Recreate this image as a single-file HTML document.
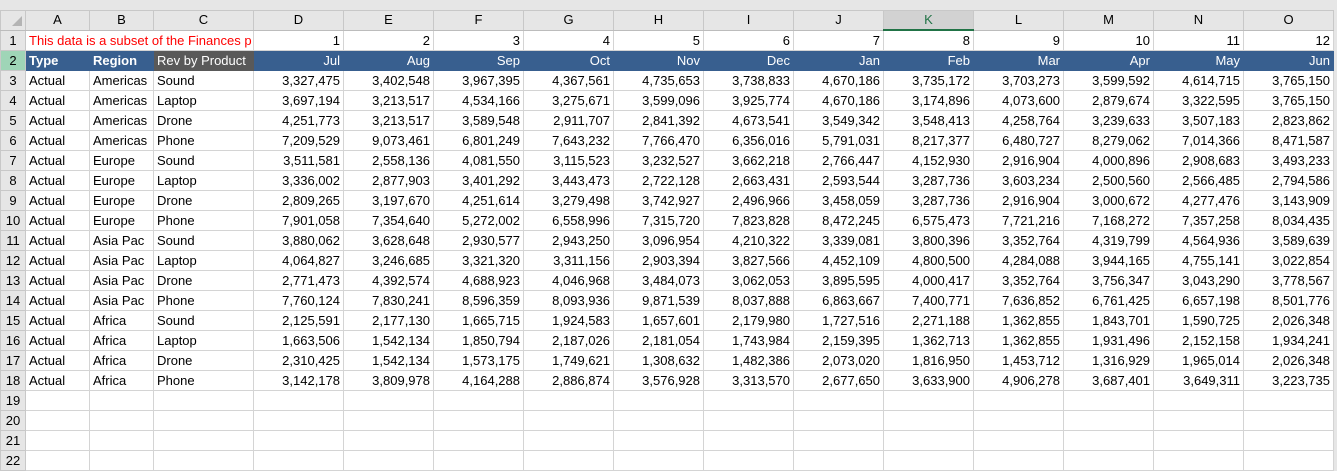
<!DOCTYPE html>
<html><head><meta charset="utf-8"><style>
body{margin:0;width:1337px;height:470px;overflow:hidden;background:#e6e6e6;font-family:"Liberation Sans",Arial,sans-serif;font-size:13px;}
table{position:absolute;left:0;top:10px;border-collapse:collapse;table-layout:fixed;width:1334px;}
td{height:19px;padding:0 3px;border:1px solid #d4d4d4;background:#fff;white-space:nowrap;overflow:hidden;line-height:19px;text-align:right;color:#000;}
tr.h td{height:18px;line-height:18px;background:#e6e6e6;text-align:center;border-color:#c8c8c8;border-bottom:1px solid #bcbcbc;}
td.r{background:#e6e6e6;text-align:center;padding:0;border-color:#c8c8c8;}
td.l{text-align:left;}
tr.b td{background:#385f8f;color:#fff;border-color:#385f8f;font-weight:normal;}
tr.b td.g{background:#595959;border-color:#595959;font-weight:normal;}
tr.b td.bo{font-weight:bold;}
tr.b td.r{background:#9fd5b7;color:#000;border-color:#c8c8c8;}
td.k{background:#d2d2d2 !important;color:#217346 !important;border-bottom:2px solid #217346 !important;}
.red{color:#ff0000;overflow:visible;}
</style></head><body>
<table>
<colgroup><col style="width:25px"><col style="width:64px"><col style="width:64px"><col style="width:100px"><col style="width:90px"><col style="width:90px"><col style="width:90px"><col style="width:90px"><col style="width:90px"><col style="width:90px"><col style="width:90px"><col style="width:90px"><col style="width:90px"><col style="width:90px"><col style="width:90px"><col style="width:90px"></colgroup>
<tr class="h"><td class="r" style="background:#e6e6e6"><svg width="12" height="12" style="vertical-align:middle;margin-left:8px"><path d="M11 1 L11 11 L1 11 Z" fill="#b4b4b4"/></svg></td><td>A</td><td>B</td><td>C</td><td>D</td><td>E</td><td>F</td><td>G</td><td>H</td><td>I</td><td>J</td><td class="k">K</td><td>L</td><td>M</td><td>N</td><td>O</td></tr>
<tr><td class="r">1</td><td class="l red" colspan="3" style="overflow:hidden">This data is a subset of the Finances p</td><td>1</td><td>2</td><td>3</td><td>4</td><td>5</td><td>6</td><td>7</td><td>8</td><td>9</td><td>10</td><td>11</td><td>12</td></tr>
<tr class="b"><td class="r">2</td><td class="l bo">Type</td><td class="l bo">Region</td><td class="l g">Rev by Product</td><td>Jul</td><td>Aug</td><td>Sep</td><td>Oct</td><td>Nov</td><td>Dec</td><td>Jan</td><td>Feb</td><td>Mar</td><td>Apr</td><td>May</td><td>Jun</td></tr>
<tr><td class="r">3</td><td class="l">Actual</td><td class="l">Americas</td><td class="l">Sound</td><td>3,327,475</td><td>3,402,548</td><td>3,967,395</td><td>4,367,561</td><td>4,735,653</td><td>3,738,833</td><td>4,670,186</td><td>3,735,172</td><td>3,703,273</td><td>3,599,592</td><td>4,614,715</td><td>3,765,150</td></tr>
<tr><td class="r">4</td><td class="l">Actual</td><td class="l">Americas</td><td class="l">Laptop</td><td>3,697,194</td><td>3,213,517</td><td>4,534,166</td><td>3,275,671</td><td>3,599,096</td><td>3,925,774</td><td>4,670,186</td><td>3,174,896</td><td>4,073,600</td><td>2,879,674</td><td>3,322,595</td><td>3,765,150</td></tr>
<tr><td class="r">5</td><td class="l">Actual</td><td class="l">Americas</td><td class="l">Drone</td><td>4,251,773</td><td>3,213,517</td><td>3,589,548</td><td>2,911,707</td><td>2,841,392</td><td>4,673,541</td><td>3,549,342</td><td>3,548,413</td><td>4,258,764</td><td>3,239,633</td><td>3,507,183</td><td>2,823,862</td></tr>
<tr><td class="r">6</td><td class="l">Actual</td><td class="l">Americas</td><td class="l">Phone</td><td>7,209,529</td><td>9,073,461</td><td>6,801,249</td><td>7,643,232</td><td>7,766,470</td><td>6,356,016</td><td>5,791,031</td><td>8,217,377</td><td>6,480,727</td><td>8,279,062</td><td>7,014,366</td><td>8,471,587</td></tr>
<tr><td class="r">7</td><td class="l">Actual</td><td class="l">Europe</td><td class="l">Sound</td><td>3,511,581</td><td>2,558,136</td><td>4,081,550</td><td>3,115,523</td><td>3,232,527</td><td>3,662,218</td><td>2,766,447</td><td>4,152,930</td><td>2,916,904</td><td>4,000,896</td><td>2,908,683</td><td>3,493,233</td></tr>
<tr><td class="r">8</td><td class="l">Actual</td><td class="l">Europe</td><td class="l">Laptop</td><td>3,336,002</td><td>2,877,903</td><td>3,401,292</td><td>3,443,473</td><td>2,722,128</td><td>2,663,431</td><td>2,593,544</td><td>3,287,736</td><td>3,603,234</td><td>2,500,560</td><td>2,566,485</td><td>2,794,586</td></tr>
<tr><td class="r">9</td><td class="l">Actual</td><td class="l">Europe</td><td class="l">Drone</td><td>2,809,265</td><td>3,197,670</td><td>4,251,614</td><td>3,279,498</td><td>3,742,927</td><td>2,496,966</td><td>3,458,059</td><td>3,287,736</td><td>2,916,904</td><td>3,000,672</td><td>4,277,476</td><td>3,143,909</td></tr>
<tr><td class="r">10</td><td class="l">Actual</td><td class="l">Europe</td><td class="l">Phone</td><td>7,901,058</td><td>7,354,640</td><td>5,272,002</td><td>6,558,996</td><td>7,315,720</td><td>7,823,828</td><td>8,472,245</td><td>6,575,473</td><td>7,721,216</td><td>7,168,272</td><td>7,357,258</td><td>8,034,435</td></tr>
<tr><td class="r">11</td><td class="l">Actual</td><td class="l">Asia Pac</td><td class="l">Sound</td><td>3,880,062</td><td>3,628,648</td><td>2,930,577</td><td>2,943,250</td><td>3,096,954</td><td>4,210,322</td><td>3,339,081</td><td>3,800,396</td><td>3,352,764</td><td>4,319,799</td><td>4,564,936</td><td>3,589,639</td></tr>
<tr><td class="r">12</td><td class="l">Actual</td><td class="l">Asia Pac</td><td class="l">Laptop</td><td>4,064,827</td><td>3,246,685</td><td>3,321,320</td><td>3,311,156</td><td>2,903,394</td><td>3,827,566</td><td>4,452,109</td><td>4,800,500</td><td>4,284,088</td><td>3,944,165</td><td>4,755,141</td><td>3,022,854</td></tr>
<tr><td class="r">13</td><td class="l">Actual</td><td class="l">Asia Pac</td><td class="l">Drone</td><td>2,771,473</td><td>4,392,574</td><td>4,688,923</td><td>4,046,968</td><td>3,484,073</td><td>3,062,053</td><td>3,895,595</td><td>4,000,417</td><td>3,352,764</td><td>3,756,347</td><td>3,043,290</td><td>3,778,567</td></tr>
<tr><td class="r">14</td><td class="l">Actual</td><td class="l">Asia Pac</td><td class="l">Phone</td><td>7,760,124</td><td>7,830,241</td><td>8,596,359</td><td>8,093,936</td><td>9,871,539</td><td>8,037,888</td><td>6,863,667</td><td>7,400,771</td><td>7,636,852</td><td>6,761,425</td><td>6,657,198</td><td>8,501,776</td></tr>
<tr><td class="r">15</td><td class="l">Actual</td><td class="l">Africa</td><td class="l">Sound</td><td>2,125,591</td><td>2,177,130</td><td>1,665,715</td><td>1,924,583</td><td>1,657,601</td><td>2,179,980</td><td>1,727,516</td><td>2,271,188</td><td>1,362,855</td><td>1,843,701</td><td>1,590,725</td><td>2,026,348</td></tr>
<tr><td class="r">16</td><td class="l">Actual</td><td class="l">Africa</td><td class="l">Laptop</td><td>1,663,506</td><td>1,542,134</td><td>1,850,794</td><td>2,187,026</td><td>2,181,054</td><td>1,743,984</td><td>2,159,395</td><td>1,362,713</td><td>1,362,855</td><td>1,931,496</td><td>2,152,158</td><td>1,934,241</td></tr>
<tr><td class="r">17</td><td class="l">Actual</td><td class="l">Africa</td><td class="l">Drone</td><td>2,310,425</td><td>1,542,134</td><td>1,573,175</td><td>1,749,621</td><td>1,308,632</td><td>1,482,386</td><td>2,073,020</td><td>1,816,950</td><td>1,453,712</td><td>1,316,929</td><td>1,965,014</td><td>2,026,348</td></tr>
<tr><td class="r">18</td><td class="l">Actual</td><td class="l">Africa</td><td class="l">Phone</td><td>3,142,178</td><td>3,809,978</td><td>4,164,288</td><td>2,886,874</td><td>3,576,928</td><td>3,313,570</td><td>2,677,650</td><td>3,633,900</td><td>4,906,278</td><td>3,687,401</td><td>3,649,311</td><td>3,223,735</td></tr>
<tr><td class="r">19</td><td></td><td></td><td></td><td></td><td></td><td></td><td></td><td></td><td></td><td></td><td></td><td></td><td></td><td></td><td></td></tr>
<tr><td class="r">20</td><td></td><td></td><td></td><td></td><td></td><td></td><td></td><td></td><td></td><td></td><td></td><td></td><td></td><td></td><td></td></tr>
<tr><td class="r">21</td><td></td><td></td><td></td><td></td><td></td><td></td><td></td><td></td><td></td><td></td><td></td><td></td><td></td><td></td><td></td></tr>
<tr><td class="r">22</td><td></td><td></td><td></td><td></td><td></td><td></td><td></td><td></td><td></td><td></td><td></td><td></td><td></td><td></td><td></td></tr>
</table>
</body></html>
